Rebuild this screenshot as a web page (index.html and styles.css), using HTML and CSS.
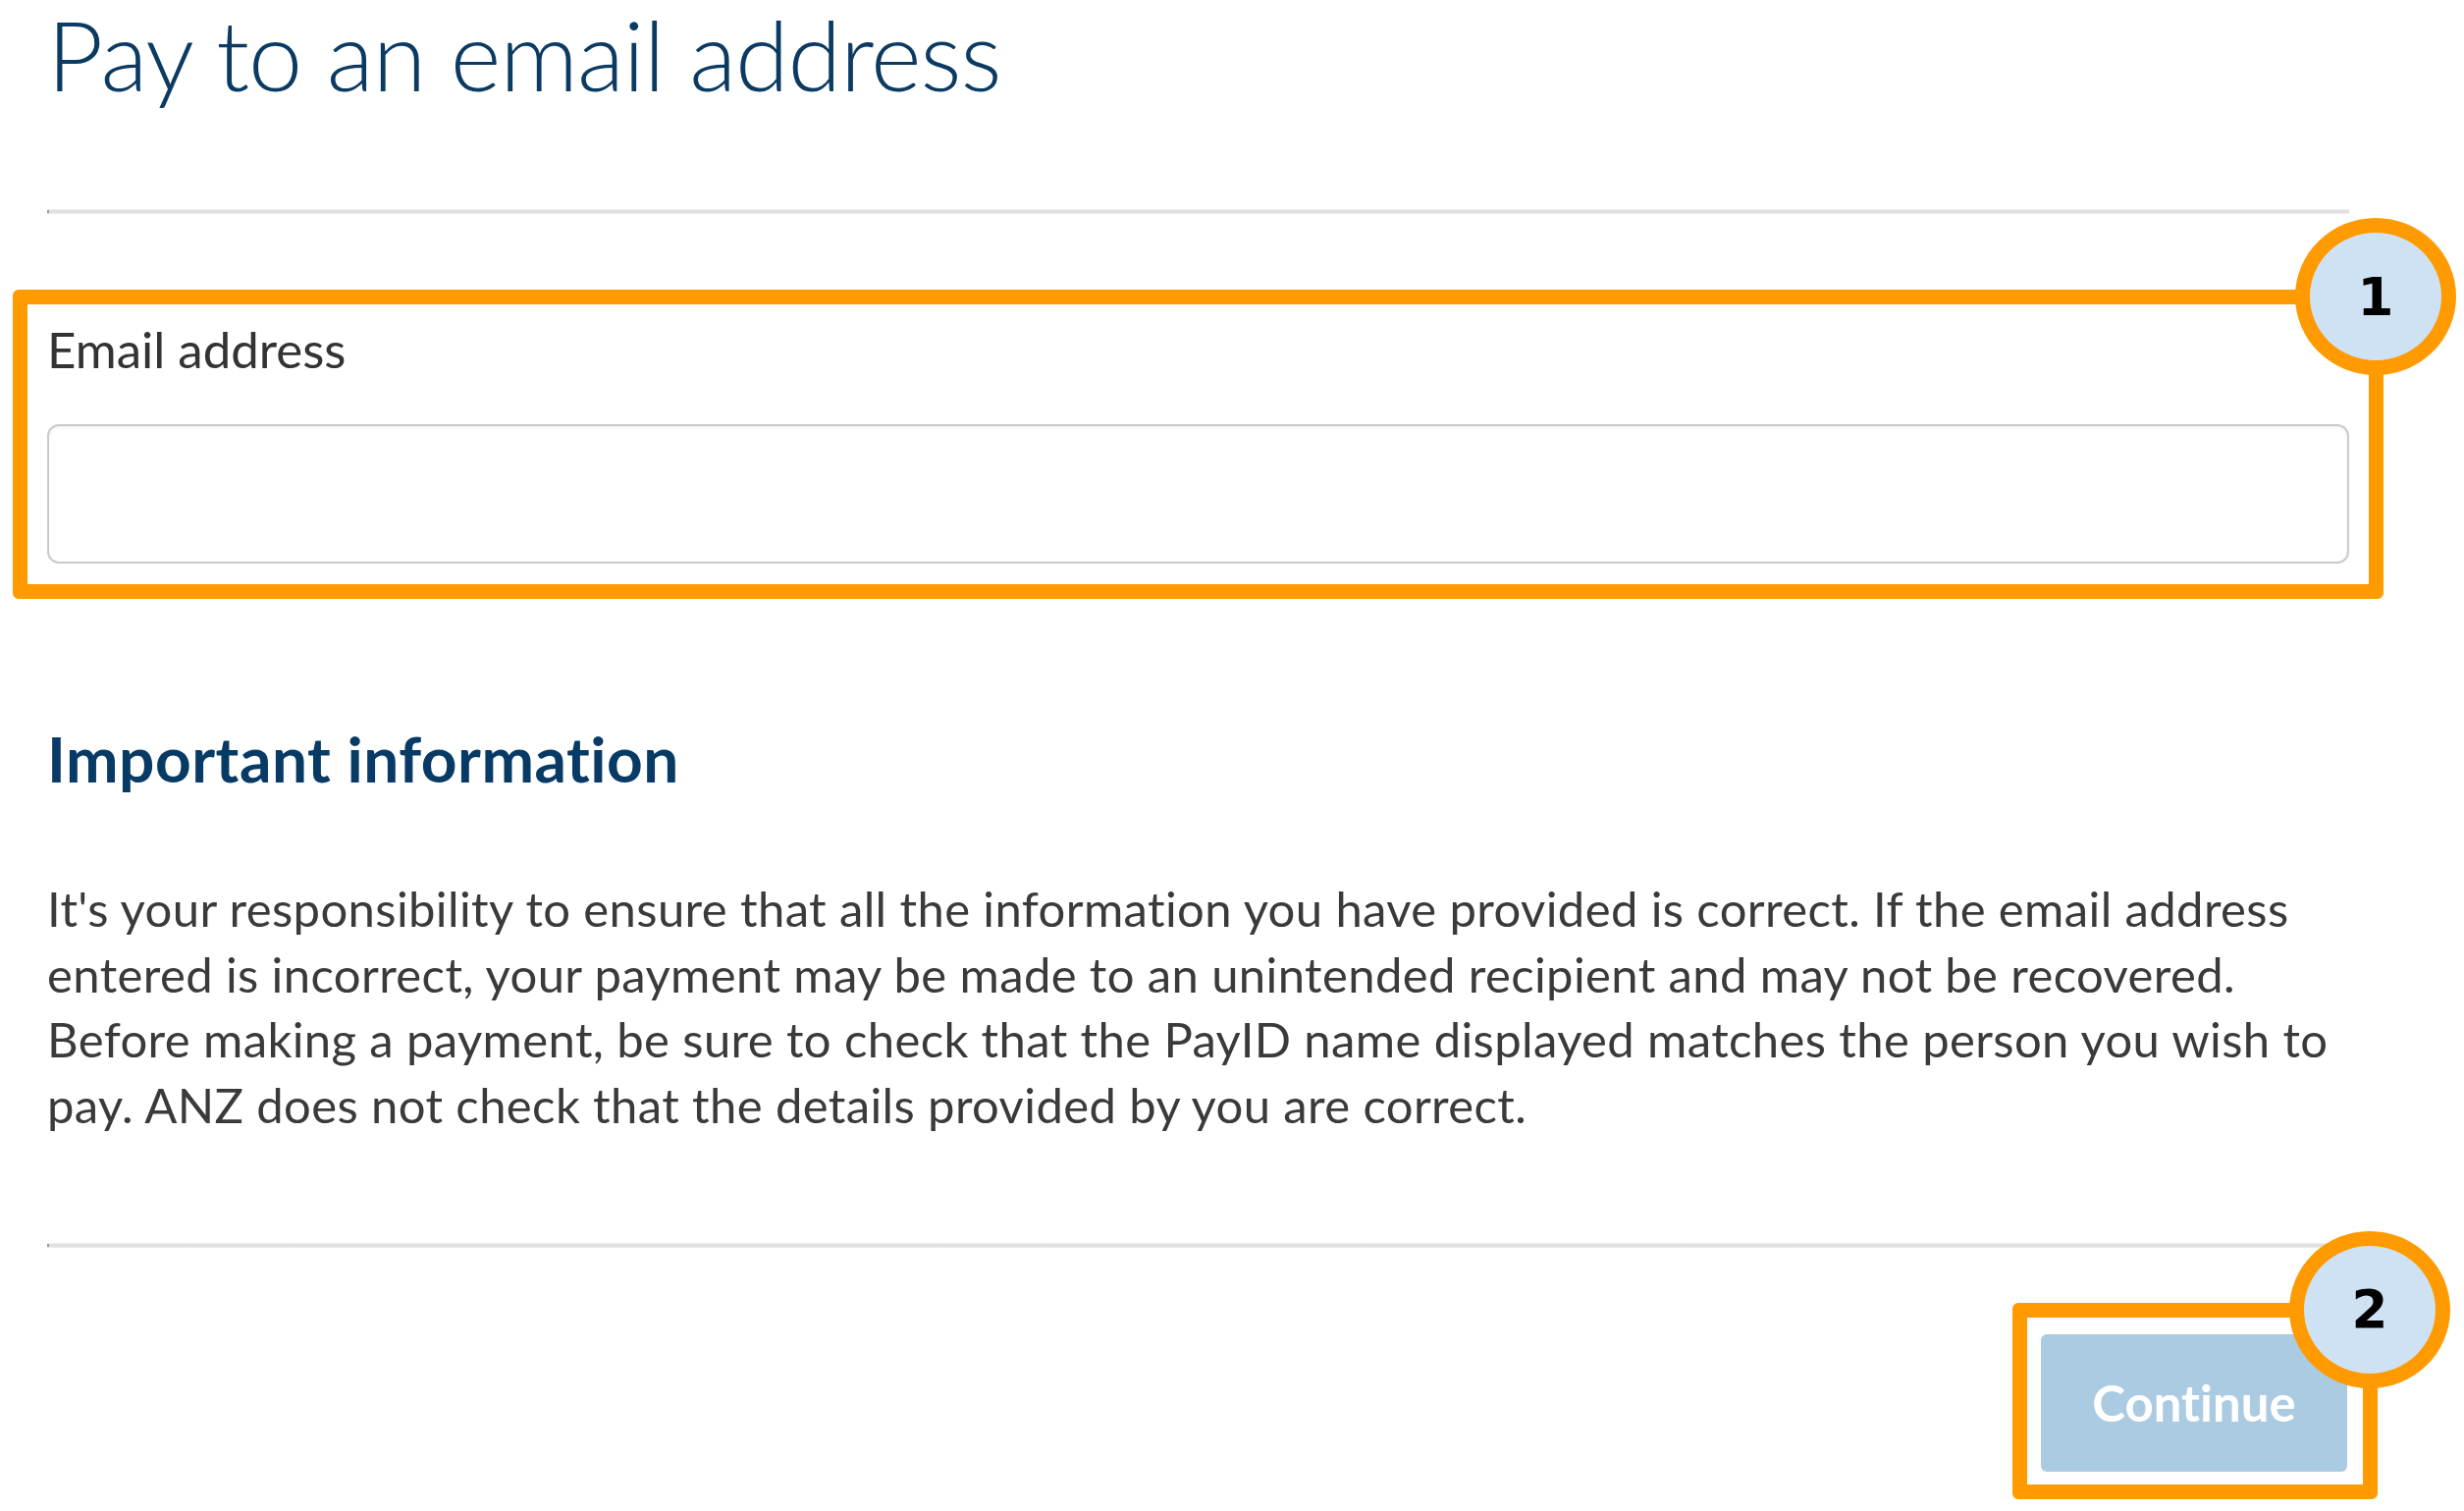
FILE: index.html
```html
<!DOCTYPE html>
<html lang="en">
<head>
<meta charset="utf-8">
<title>Pay to an email address</title>
<link rel="stylesheet" href="styles.css">
</head>
<body>
<main class="page">
  <h1 class="title">Pay to an email address</h1>
  <div class="rule" role="separator"></div>

  <div class="annot annot-field">
    <label class="field-label" for="email">Email address</label>
    <input id="email" class="field-input" type="email">
    <span class="badge">1</span>
  </div>

  <section class="info">
    <h2 class="info-title">Important information</h2>
    <p class="info-text">It's your responsibility to ensure that all the information you have provided is correct. If the email address<br>entered is incorrect, your payment may be made to an unintended recipient and may not be recovered.<br>Before making a payment, be sure to check that the PayID name displayed matches the person you wish to<br>pay. ANZ does not check that the details provided by you are correct.</p>
  </section>

  <div class="rule rule-bottom" role="separator"></div>

  <div class="actions">
    <div class="annot annot-button">
      <button class="btn-continue" type="button">Continue</button>
      <span class="badge">2</span>
    </div>
  </div>
</main>
</body>
</html>
```

FILE: styles.css
```css
* { box-sizing: border-box; }

html, body {
  margin: 0;
  background: #ffffff;
}

body {
  font-family: Lato, "Open Sans", "Noto Sans", sans-serif;
  font-variant-ligatures: none;
  color: #333333;
}

.page {
  padding: 0 117px 0 48px;
}

.title {
  margin: 0;
  font-weight: 300;
  font-size: 99px;
  line-height: 110px;
  letter-spacing: -1.1px;
  color: #0b3a63;
}

.rule {
  position: relative;
  margin-top: 103px;
  height: 5px;
  background: linear-gradient(#efefef, #dcdcdc 50%, #efefef);
}

.rule::before {
  content: "";
  position: absolute;
  left: 0;
  top: 1px;
  width: 2px;
  height: 3px;
  background: #9a9a9a;
}

.rule-bottom {
  margin-top: 107px;
}

.annot {
  position: relative;
  border: 15px solid #ff9a00;
  border-radius: 6px;
}

.annot-field {
  margin: 77px -35px 0;
  padding: 15px 20px 21px;
}

.field-label {
  display: block;
  font-size: 51px;
  line-height: 62px;
  color: #333333;
}

.field-input {
  display: block;
  width: 100%;
  height: 142px;
  margin: 45px 0 0;
  border: 2px solid #cbcbcb;
  border-radius: 12px;
  box-shadow: inset 0 1px 3px rgba(0, 0, 0, 0.08);
  background: #ffffff;
  font: inherit;
}

.info {
  margin-top: 125px;
}

.info-title {
  margin: 0;
  font-size: 64px;
  line-height: 76px;
  font-weight: 700;
  letter-spacing: 0.5px;
  color: #073b66;
}

.info-text {
  margin: 81px 0 0;
  font-size: 49px;
  line-height: 66.7px;
  letter-spacing: 0.38px;
  white-space: nowrap;
  color: #3a3a3a;
}

.actions {
  display: flex;
  justify-content: flex-end;
  margin: 56px -29px 0 0;
}

.annot-button {
  padding: 17px 16px 13px 14px;
}

.btn-continue {
  display: block;
  width: 312px;
  height: 140px;
  padding: 0;
  border: 0;
  border-radius: 6px;
  background: #abcbe3;
  color: #ffffff;
  font-family: Lato, "Open Sans", sans-serif;
  font-variant-ligatures: none;
  font-weight: 700;
  font-size: 51px;
  line-height: 1;
}

.badge {
  position: absolute;
  top: -88px;
  right: -89px;
  width: 164px;
  height: 160px;
  border: 15px solid #ff9a00;
  border-radius: 50%;
  background: #cfe2f3;
  display: flex;
  align-items: center;
  justify-content: center;
  font-family: "DejaVu Sans", sans-serif;
  font-weight: 700;
  font-size: 53px;
  line-height: 1;
  color: #000000;
}
```
